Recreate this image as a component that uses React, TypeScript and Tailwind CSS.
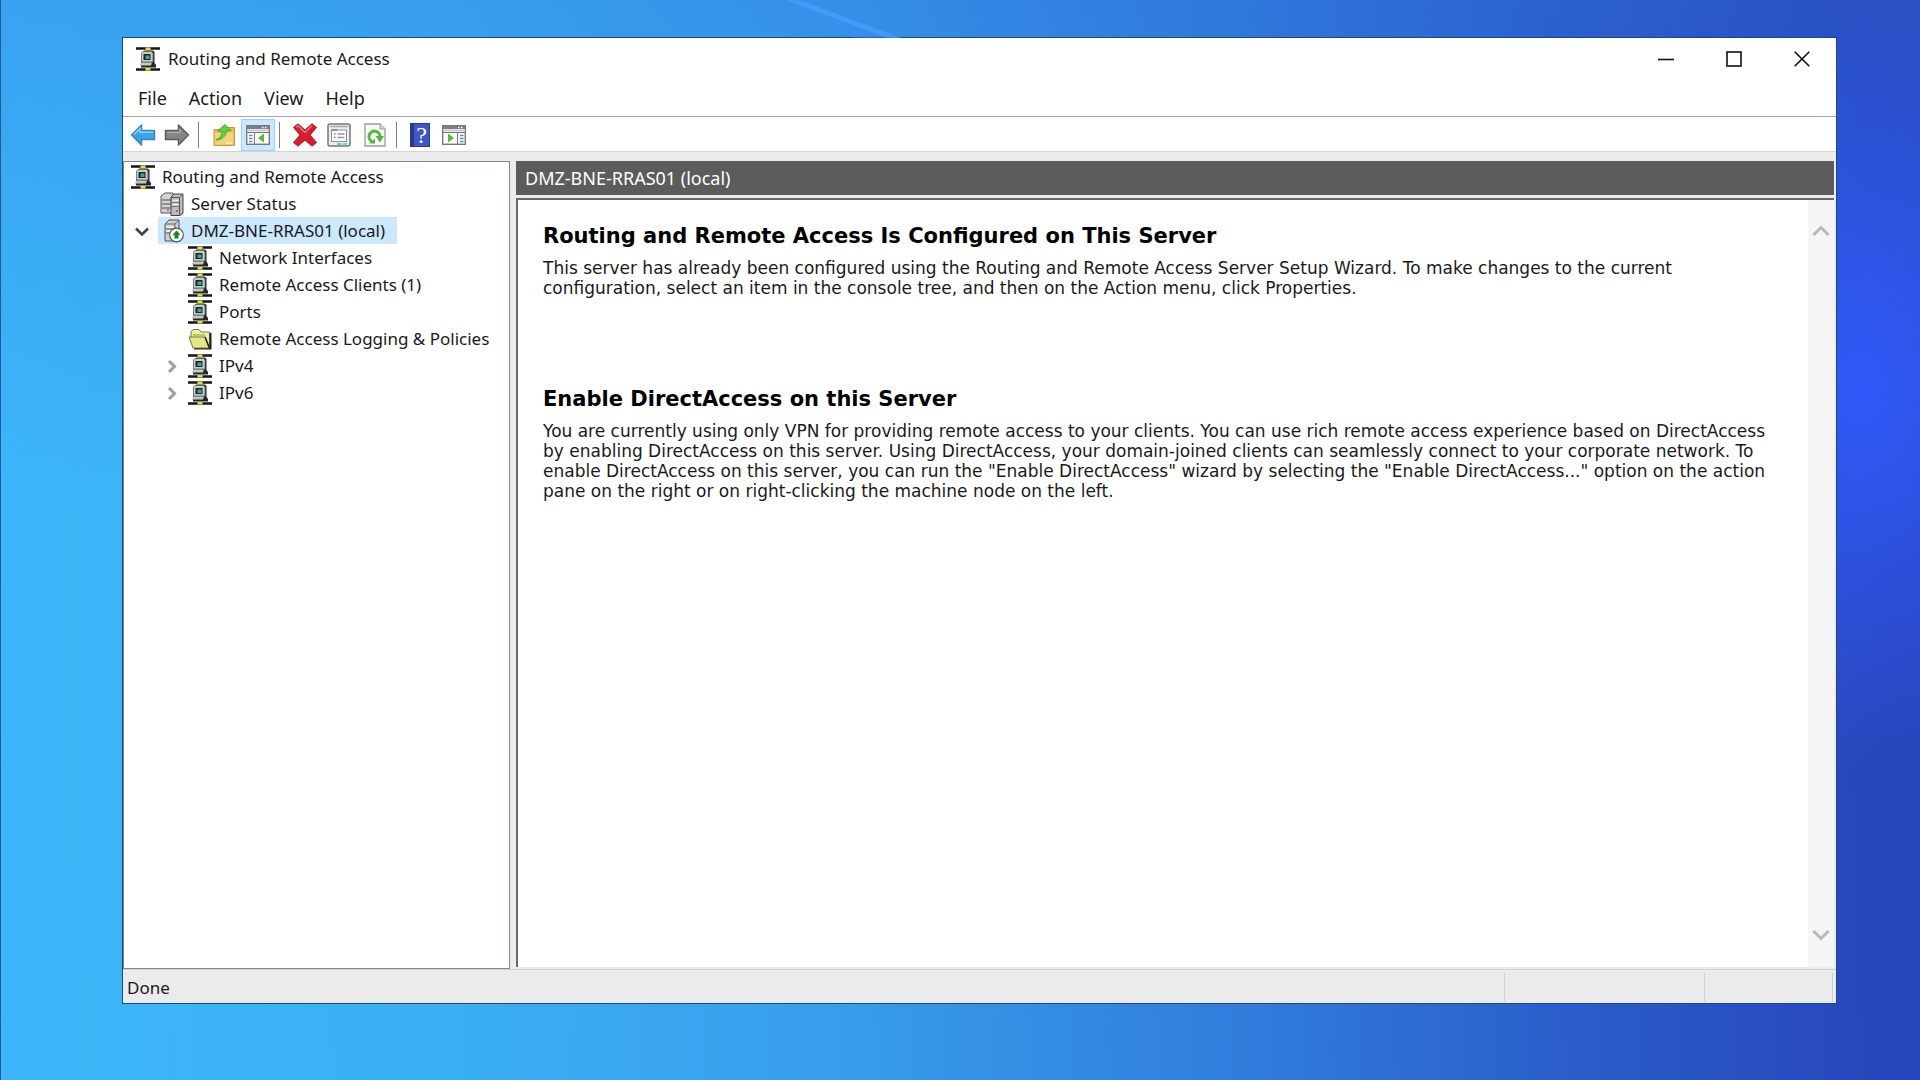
import React from "react";

function NodeIcon() {
  return (
    <svg width="24" height="24" viewBox="0 0 24 24" aria-hidden="true" className="shrink-0">
      <path d="M0 1.500h24M0 22.500h24" stroke="#161616" strokeWidth="2.400" />
      <path d="M9.500 .5h5v3h-5zM9.500 20.500h5v3h-5z" fill="#dfe23a" />
      <path d="M6.500 5l2-1.500h8l2 1.500v11l1.500 2v2.500H5V18z" fill="#262626" />
      <path d="M5.500 6L7 4.500h8.500L17 6v9H5.500z" fill="#c6cac9" stroke="#666" strokeWidth=".8" />
      <rect x="7.500" y="7" width="7" height="6" fill="#0e2c28" />
      <rect x="9.500" y="8.500" width="4" height="3.500" fill="#46a58c" />
      <path d="M4 17l2-1.500h10L15 18.500H4z" fill="#c4c8c7" />
    </svg>
  );
}

function ServersIcon() {
  return (
    <svg width="24" height="24" viewBox="0 0 24 24" aria-hidden="true" className="shrink-0">
      <path d="M1 4l4-3h8v18l-2 2H1z" fill="#d2d2d2" stroke="#555" />
      <path d="M2 8h9M2 12h9M2 16h9" stroke="#7b7b7b" strokeWidth="1.300" />
      <path d="M11 5l3-3h9v19l-3 2.500h-9z" fill="#bdbaba" stroke="#444" />
      <path d="M11 5.500h8.500v18M19.500 5.500l3-3" stroke="#555" fill="none" />
      <path d="M12.500 8.500h6M12.500 12.500h6" stroke="#f2f2f2" strokeWidth="1.500" />
      <path d="M12 10.500h7M12 14.500h7" stroke="#777" />
      <path d="M16 19h2M7 18h2" stroke="#c05050" strokeWidth="1.500" />
    </svg>
  );
}

function LocalServerIcon() {
  return (
    <svg width="24" height="24" viewBox="0 0 24 24" aria-hidden="true" className="shrink-0">
      <path d="M5 5l4-4h10v16l-4 5H5z" fill="#cfcfcf" stroke="#555" />
      <path d="M5 5h10v16M15 5l4-4" stroke="#666" fill="none" />
      <path d="M6.500 8h7M6.500 12h7" stroke="#f5f5f5" strokeWidth="1.500" />
      <path d="M6 10h8M6 14h8" stroke="#555" />
      <circle cx="16.500" cy="16" r="6.800" fill="#fff" stroke="#555" strokeWidth="1.200" />
      <path d="M16.500 11.500l4 4.300h-2v3.700h-4v-3.700h-2z" fill="#128a1c" />
    </svg>
  );
}

function FolderIcon() {
  return (
    <svg width="24" height="24" viewBox="0 0 24 24" aria-hidden="true" className="shrink-0">
      <path d="M3 10V5l2-2.500h6L13 5h8.500v15.500L18 21z" fill="#eef0a0" stroke="#77774a" />
      <path d="M22.500 6v15.500H6" fill="none" stroke="#222" strokeWidth="2" />
      <path d="M1 10h16l4 11H5z" fill="#e3e888" stroke="#77774a" />
      <path d="M17 10l4.500 11" stroke="#222" strokeWidth="1.500" />
      <path d="M5 8h12" stroke="#c0c468" strokeWidth="2" />
    </svg>
  );
}

function ArrowIcon({ forward = false }: { forward?: boolean }) {
  return forward ? (
    <svg width="26" height="24" viewBox="0 0 26 24" aria-hidden="true">
      <path d="M24.500 12L14.500 2v5.500H1.500v9h13V22z" fill="#858585" stroke="#5c5c5c" strokeWidth="1.500" strokeLinejoin="round" />
      <path d="M3 9.500h13V6" fill="none" stroke="#a9a9a9" strokeWidth="1.500" />
    </svg>
  ) : (
    <svg width="26" height="24" viewBox="0 0 26 24" aria-hidden="true">
      <path d="M1.500 12L11.500 2v5.500h13v9h-13V22z" fill="#38a5e8" stroke="#3f83b8" strokeWidth="1.500" strokeLinejoin="round" />
      <path d="M4 11.500l6-6v3.700h13" fill="none" stroke="#8bd3f8" strokeWidth="1.500" />
    </svg>
  );
}

function UpFolderIcon() {
  return (
    <svg width="24" height="24" viewBox="0 0 24 24" aria-hidden="true">
      <path d="M2 6.500h11l2-2h7.500V22.500H2z" fill="#e9bd55" stroke="#c79a3c" />
      <path d="M3 9.500h18.500v12H3z" fill="#f4d277" />
      <path d="M14 20h6" stroke="#fff2c4" strokeWidth="1.500" />
      <path d="M4 17c4-2 5.500-4 6-8L5.500 8 13 1.500 19 7.500l-4.500.8C14 13 10 17 4 17z" fill="#63cf3c" stroke="#3f9c2c" strokeWidth=".8" />
    </svg>
  );
}

function PaneIcon({ right = false }: { right?: boolean }) {
  return (
    <svg width="24" height="20" viewBox="0 0 24 20" aria-hidden="true">
      <rect x=".7" y=".7" width="22.600" height="18.600" fill="#fff" stroke="#76777f" strokeWidth="1.400" />
      <path d="M1 2.500h22" stroke="#7d7f88" strokeWidth="3" />
      <path d="M2 5.500h20" stroke="#c9c9d0" strokeWidth="2" />
      <path d="M16 2.500h1.500M19 2.500h1.500" stroke="#fff" strokeWidth="1.400" />
      {right ? (
        <>
          <path d="M15.500 7v12M1 7.500h22" stroke="#76777f" />
          <path d="M18 10.500h3.500M18 13.500h3.500M18 16.500h3.500" stroke="#5f86bd" strokeWidth="1.500" />
          <path d="M6 8.500l6 4.500-6 4.500z" fill="#4fbe32" />
        </>
      ) : (
        <>
          <path d="M8.500 7v12M1 7.500h22" stroke="#76777f" />
          <path d="M3 10.500h3.500M3 13.500h3.500M3 16.500h3.500" stroke="#5f86bd" strokeWidth="1.500" />
          <path d="M18 8.500L12 13l6 4.500z" fill="#4fbe32" />
        </>
      )}
    </svg>
  );
}

function DeleteIcon() {
  return (
    <svg width="26" height="24" viewBox="0 0 26 24" aria-hidden="true">
      <path d="M1.500 4.500L6 .8l7 6.200L20 .8l4.500 3.700-6.500 7.500 6.500 7.500-4.500 3.700-7-6.200-7 6.200-4.500-3.700L8 12z" fill="#d31f2b" stroke="#b01520" strokeLinejoin="round" />
      <path d="M4 4.500l2-1.800 7 6.800 7-6.800" fill="none" stroke="#ee7b80" strokeWidth="1.300" />
    </svg>
  );
}

function PropertiesIcon() {
  return (
    <svg width="24" height="24" viewBox="0 0 24 24" aria-hidden="true">
      <rect x="1" y="1" width="22" height="22" rx="2" fill="#eeeeee" stroke="#777" strokeWidth="1.500" />
      <path d="M3 3.500h18" stroke="#aaa" strokeWidth="1.500" />
      <rect x="4.500" y="7" width="15" height="11.500" fill="#fff" stroke="#8d9299" />
      <path d="M4.500 7h6" stroke="#8d9299" strokeWidth="2" />
      <path d="M7 11h1.500M7 14.500h1.500" stroke="#4c82b8" strokeWidth="1.500" />
      <path d="M10.500 11h7M10.500 14.500h7" stroke="#999" strokeWidth="1.300" />
      <path d="M10 21h4.500M16 21h4" stroke="#3cc0dd" strokeWidth="1.700" />
    </svg>
  );
}

function RefreshIcon() {
  return (
    <svg width="22" height="24" viewBox="0 0 22 24" aria-hidden="true">
      <path d="M1 1h15l5 5v17H1z" fill="#f8f8f8" stroke="#9b9b9b" strokeWidth="1.300" />
      <path d="M16 1v5h5" fill="#ddd" stroke="#9b9b9b" />
      <path d="M8 18.500A5.500 5.500 0 1 1 16 13.500" fill="none" stroke="#4cbb3c" strokeWidth="3" />
      <path d="M11.500 13h8.500l-4 6.500z" fill="#4cbb3c" />
      <path d="M5 20.500h6v-5z" fill="#4cbb3c" />
    </svg>
  );
}

function HelpIcon() {
  return (
    <span className="flex h-6 w-5 items-center justify-center border border-l-4 border-[#2b3a86] bg-[#3f57c4] font-['Liberation_Serif',serif] text-[24px] leading-6 text-white">
      ?
    </span>
  );
}

function Chevron({ dir, className }: { dir: "up" | "down" | "right"; className: string }) {
  const d = { up: "M1.500 13l7.500-7.500 7.500 7.500", down: "M1.500 6l7.500 7.500L16.500 6", right: "M7 4l5.500 5.500L7 15" }[dir];
  return (
    <svg width="18" height="18" viewBox="0 0 18 18" aria-hidden="true" className={className}>
      <path d={d} fill="none" stroke="currentColor" strokeWidth="3" />
    </svg>
  );
}

function ExpandedChevron() {
  return (
    <svg width="18" height="18" viewBox="0 0 18 18" aria-hidden="true" className="mr-[7px] shrink-0 text-[#404040]">
      <path d="M3 6.500l6 6 6-6" fill="none" stroke="currentColor" strokeWidth="2.500" />
    </svg>
  );
}

function WallpaperGlint() {
  return (
    <svg width="180" height="38" viewBox="0 0 180 38" aria-hidden="true" className="absolute top-0 left-[41%]">
      <path d="M-20-8L0-4 118 40H70z" fill="#3f90f8" opacity=".35" />
      <path d="M-12-6L112 40" stroke="#4ba2ff" strokeWidth="5" opacity=".6" />
    </svg>
  );
}

function ToolButton({ label, className = "w-[34px]", children }: { label: string; className?: string; children: React.ReactNode }) {
  return (
    <button aria-label={label} className={`flex h-8 items-center justify-center ${className}`}>
      {children}
    </button>
  );
}

function Separator() {
  return <div className="h-[26px] w-px bg-[#7f7f7f]" />;
}

type TreeRow = { label: string; icon: React.ReactNode; indent: string; expand?: "down" | "right"; selected?: boolean };

const rows: TreeRow[] = [
  { label: "Routing and Remote Access", icon: <NodeIcon />, indent: "pl-[7px]" },
  { label: "Server Status", icon: <ServersIcon />, indent: "pl-9" },
  { label: "DMZ-BNE-RRAS01 (local)", icon: <LocalServerIcon />, indent: "pl-[9px]", expand: "down", selected: true },
  { label: "Network Interfaces", icon: <NodeIcon />, indent: "pl-16" },
  { label: "Remote Access Clients (1)", icon: <NodeIcon />, indent: "pl-16" },
  { label: "Ports", icon: <NodeIcon />, indent: "pl-16" },
  { label: "Remote Access Logging & Policies", icon: <FolderIcon />, indent: "pl-16" },
  { label: "IPv4", icon: <NodeIcon />, indent: "pl-[38px]", expand: "right" },
  { label: "IPv6", icon: <NodeIcon />, indent: "pl-[38px]", expand: "right" },
];

function Tree() {
  return (
    <ul role="tree" aria-label="Console tree" className="w-[387px] shrink-0 border border-[#828790] bg-white pt-px">
      {rows.map((r) => (
        <li key={r.label} role="treeitem" aria-selected={!!r.selected} className={`flex h-[27px] items-center ${r.indent}`}>
          {r.expand === "down" && <ExpandedChevron />}
          {r.expand === "right" && <Chevron dir="right" className="mr-2 shrink-0 text-[#a0a0a0]" />}
          <span className={r.selected ? "flex h-[27px] items-center gap-[7px] bg-[#cce8ff] pr-3 pl-0.5" : "flex items-center gap-[7px]"}>
            {r.icon}
            <span className="whitespace-nowrap">{r.label}</span>
          </span>
        </li>
      ))}
    </ul>
  );
}

export default function App() {
  return (
    <div className="relative flex h-screen flex-col overflow-hidden border-l border-[#1d5c94] bg-[radial-gradient(ellipse_240px_380px_at_97%_36%,#3159fa_0%,#2d50e000_100%),linear-gradient(180deg,#2f70e044_0%,#2f70e000_45%),linear-gradient(88deg,#3cb6f8_0%,#3bb0f4_22%,#389eec_42%,#307cdc_64%,#2a5ac8_82%,#2745ba_97%)] pt-[37px] pr-[83px] pb-[76px] pl-[121px] font-['Noto_Sans','Open_Sans',sans-serif] text-[17px] text-[#1a1a1a]">
      <WallpaperGlint />
      <main className="flex min-h-0 flex-1 flex-col border border-[#1b4a78] bg-white">
        <header className="flex h-[42px] shrink-0 items-center pl-[13px]">
          <NodeIcon />
          <h1 className="ml-2 flex-1">Routing and Remote Access</h1>
          <button aria-label="Minimize" className="flex h-full w-[68px] items-center justify-center">
            <svg width="16" height="16" viewBox="0 0 16 16"><path d="M0 8.500h16" stroke="#111" strokeWidth="1.600" /></svg>
          </button>
          <button aria-label="Maximize" className="flex h-full w-[68px] items-center justify-center">
            <svg width="16" height="16" viewBox="0 0 16 16"><rect x="1" y="1" width="14" height="14" fill="none" stroke="#111" strokeWidth="1.600" /></svg>
          </button>
          <button aria-label="Close" className="flex h-full w-[68px] items-center justify-center">
            <svg width="16" height="16" viewBox="0 0 16 16"><path d="M.7.7l14.600 14.600M15.300.7L.7 15.300" stroke="#111" strokeWidth="1.600" /></svg>
          </button>
        </header>
        <nav className="flex h-[37px] shrink-0 items-center gap-[22px] border-b border-[#a6a6a6] pt-px pl-[15px] text-[18px]">
          <button>File</button>
          <button>Action</button>
          <button>View</button>
          <button>Help</button>
        </nav>
        <div role="toolbar" aria-label="Standard" className="flex h-[35px] shrink-0 items-center border-b border-[#d4d4d4] pt-0.5 pl-[3px]">
          <ToolButton label="Back"><ArrowIcon /></ToolButton>
          <ToolButton label="Forward"><ArrowIcon forward /></ToolButton>
          <div className="w-1" />
          <Separator />
          <div className="w-2" />
          <ToolButton label="Up one level"><UpFolderIcon /></ToolButton>
          <ToolButton label="Show console tree" className="w-[34px] border border-[#99d1ff] bg-[#cce8ff]"><PaneIcon /></ToolButton>
          <div className="w-1" />
          <Separator />
          <div className="w-2" />
          <ToolButton label="Delete"><DeleteIcon /></ToolButton>
          <ToolButton label="Properties"><PropertiesIcon /></ToolButton>
          <div className="w-0.5" />
          <ToolButton label="Refresh"><RefreshIcon /></ToolButton>
          <div className="w-1" />
          <Separator />
          <div className="w-1.5" />
          <ToolButton label="Help"><HelpIcon /></ToolButton>
          <ToolButton label="Show action pane"><PaneIcon right /></ToolButton>
        </div>
        <div className="flex min-h-0 flex-1 gap-1.5 bg-[#ececec] pt-[9px]">
          <Tree />
          <section className="flex min-w-0 flex-1 flex-col pr-0.5 pb-0.5">
            <h2 className="flex h-[34px] shrink-0 items-center bg-[#5c5c5c] pl-[9px] text-[18px] text-white">DMZ-BNE-RRAS01 (local)</h2>
            <div className="mt-[3px] flex min-h-0 flex-1 border-t-2 border-l-2 border-[#696969] bg-white">
              <article className="min-w-0 flex-1 pt-[22px] pl-[25px] font-['DejaVu_Sans',sans-serif] text-[17px] leading-5">
                <h3 className="text-[21px] leading-7 font-bold text-black">Routing and Remote Access Is Configured on This Server</h3>
                <p className="mt-2 whitespace-nowrap">
                  This server has already been configured using the Routing and Remote Access Server Setup Wizard. To make changes to the current
                  <br />
                  configuration, select an item in the console tree, and then on the Action menu, click Properties.
                </p>
                <h3 className="mt-[87px] text-[21px] leading-7 font-bold text-black">Enable DirectAccess on this Server</h3>
                <p className="mt-2 whitespace-nowrap">
                  You are currently using only VPN for providing remote access to your clients. You can use rich remote access experience based on DirectAccess
                  <br />
                  by enabling DirectAccess on this server. Using DirectAccess, your domain-joined clients can seamlessly connect to your corporate network. To
                  <br />
                  enable DirectAccess on this server, you can run the "Enable DirectAccess" wizard by selecting the "Enable DirectAccess..." option on the action
                  <br />
                  pane on the right or on right-clicking the machine node on the left.
                </p>
              </article>
              <div className="flex w-[26px] shrink-0 flex-col items-center justify-between bg-[#f5f5f5] pt-[22px] pb-6">
                <button aria-label="Scroll up"><Chevron dir="up" className="text-[#b8b8b8]" /></button>
                <button aria-label="Scroll down"><Chevron dir="down" className="text-[#b8b8b8]" /></button>
              </div>
            </div>
          </section>
        </div>
        <footer className="flex h-[34px] shrink-0 items-stretch border-t border-[#d0d0d0] bg-[#ebebeb] pt-[3px] pr-[3px] pb-px pl-1">
          <span className="flex flex-1 items-center">Done</span>
          <span className="w-[200px] border-l border-[#cfcfcf]" />
          <span className="w-[129px] border-x border-[#cfcfcf]" />
        </footer>
      </main>
    </div>
  );
}
